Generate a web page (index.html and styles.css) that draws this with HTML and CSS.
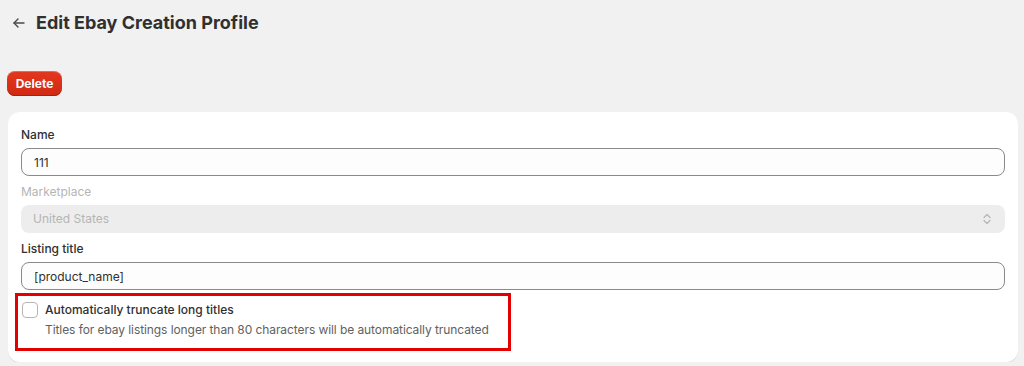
FILE: index.html
```html
<!DOCTYPE html>
<html lang="en">
<head>
<meta charset="UTF-8">
<meta name="viewport" content="width=device-width, initial-scale=1.0">
<title>Edit Ebay Creation Profile</title>
<link rel="stylesheet" href="styles.css">
</head>
<body>

<div class="page">
    <div class="page-header">
        <button class="back-btn" type="button" aria-label="Back">
            <svg width="14" height="14" viewBox="0 0 14 14" fill="none" stroke="#4a4a4a" stroke-width="1.4" stroke-linecap="round" stroke-linejoin="round">
                <path d="M12 7H2"/>
                <path d="M6 3L2 7l4 4"/>
            </svg>
        </button>
        <h1 class="page-title">Edit Ebay Creation Profile</h1>
    </div>

    <div class="actions">
        <button class="btn-delete" type="button">Delete</button>
    </div>

    <form class="card" id="profileForm">
        <div class="field">
            <label for="name">Name</label>
            <input class="text-input" type="text" id="name" value="111">
        </div>

        <div class="field disabled">
            <label for="marketplace">Marketplace</label>
            <div class="select">
                <span>United States</span>
                <svg width="12" height="14" viewBox="0 0 12 14" fill="none" stroke="#b5b5b5" stroke-width="1.2" stroke-linecap="round" stroke-linejoin="round">
                    <path d="M3 5.5L6 2.5l3 3"/>
                    <path d="M3 8.5L6 11.5l3-3"/>
                </svg>
            </div>
        </div>

        <div class="field">
            <label for="listingTitle">Listing title</label>
            <input class="text-input" type="text" id="listingTitle" value="[product_name]">
        </div>

        <div class="highlight">
            <label class="checkbox-row">
                <span class="checkbox"></span>
                <span>Automatically truncate long titles</span>
            </label>
            <p class="help-text">Titles for ebay listings longer than 80 characters will be automatically truncated</p>
        </div>
    </form>
</div>

</body>
</html>
```

FILE: styles.css
```css
/* page layout */
* {
    box-sizing: border-box;
}
body {
    margin: 0;
    background: #f1f1f1;
    font-family: Inter, "Noto Sans", sans-serif;
    font-size: 12px;
    line-height: 20px;
    color: #303030;
}
.page {
    padding: 0 6px 0 8px;
}
.page-header {
    display: flex;
    align-items: center;
    gap: 7px;
    height: 44px;
    padding-top: 1px;
}
.back-btn {
    display: flex;
    align-items: center;
    justify-content: center;
    width: 20px;
    height: 20px;
    padding: 0;
    margin-left: 1px;
    border: none;
    background: none;
    cursor: pointer;
}
.page-title {
    margin: 0;
    font-size: 18px;
    line-height: 24px;
    font-weight: 700;
    color: #303030;
}
.actions {
    padding: 27px 0 16px;
}
.btn-delete {
    display: block;
    height: 25px;
    width: 55px;
    margin-left: -1px;
    border: none;
    border-radius: 8px;
    background: linear-gradient(#e4361f, #d02a12);
    box-shadow: 0 -1px 0 #a1200e inset, 0 1px 0 rgba(255, 255, 255, 0.25) inset;
    color: #fff;
    font-family: inherit;
    font-size: 12px;
    font-weight: 650;
    cursor: pointer;
}

/* card */
.card {
    background: #fff;
    border-radius: 12px;
    padding: 13px 13px 11px;
    box-shadow: 0 1px 0 #dcdcdc;
}
.field {
    display: flex;
    flex-direction: column;
    gap: 3px;
    margin-bottom: 6px;
}
.field label {
    font-weight: 500;
}
.text-input {
    height: 28px;
    padding: 0 12px;
    border: 1px solid #8a8a8a;
    border-radius: 8px;
    background: #fdfdfd;
    font-family: inherit;
    font-size: 12px;
    color: #303030;
}
.field.disabled label {
    color: #b5b5b5;
    font-weight: 400;
}
.select {
    display: flex;
    align-items: center;
    justify-content: space-between;
    height: 28px;
    padding: 0 12px;
    border-radius: 8px;
    background: #ededed;
    color: #b5b5b5;
}

/* highlighted checkbox block */
.highlight {
    width: 496px;
    margin: -3px 0 0 -6px;
    padding: 4px 10px 8px 4px;
    border: 3px solid #e20000;
}
.checkbox-row {
    display: flex;
    align-items: center;
    gap: 7px;
    font-weight: 450;
}
.checkbox {
    width: 16px;
    height: 16px;
    border: 1px solid #b5b5b5;
    border-radius: 4px;
    background: #fff;
}
.help-text {
    margin: 0;
    padding-left: 23px;
    color: #616161;
    letter-spacing: -0.08px;
    white-space: nowrap;
}
```
